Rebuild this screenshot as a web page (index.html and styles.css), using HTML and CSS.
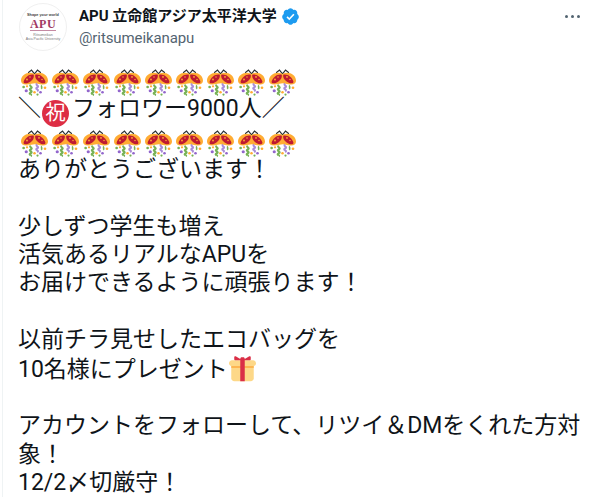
FILE: index.html
```html
<!DOCTYPE html>
<html lang="ja">
<head>
    <meta charset="UTF-8">
    <meta name="viewport" content="width=device-width, initial-scale=1.0">
    <title>APU 立命館アジア太平洋大学</title>
    <link rel="stylesheet" href="styles.css">
</head>
<body>
    <svg class="defs" width="0" height="0">
        <symbol id="confetti" viewBox="0 0 36 36">
            <path d="M18 6.500 L14 1.500 L9.500 5 M18 6.500 L22 1.500 L26.500 5" fill="none" stroke="#292f33" stroke-width="1.500"/>
            <path d="M17 6C9 3 0 8 0 15.500C0 19 3 21 8 20.500L18 19L28 20.500C33 21 36 19 36 15.500C36 8 27 3 19 6L18 7Z" fill="#ffac33"/>
            <path d="M17 7.500C12 6 5.500 10 3.500 16.500C3 19 6 19.500 9 18.500C14 16.500 18 12 17 7.500Z" fill="#be1931"/>
            <path d="M19 7.500C24 6 30.500 10 32.500 16.500C33 19 30 19.500 27 18.500C22 16.500 18 12 19 7.500Z" fill="#be1931"/>
            <circle cx="8" cy="14" r="1.200" fill="#ffac33"/>
            <circle cx="12" cy="10.500" r="1" fill="#ffac33"/>
            <circle cx="24" cy="10.500" r="1.200" fill="#ffac33"/>
            <circle cx="28" cy="14" r="1" fill="#ffac33"/>
            <path d="M13 21c-3 2 4 3 0 5s4 3 0 5s2 2.500 0 4" fill="none" stroke="#77b255" stroke-width="2.800"/>
            <path d="M21.500 19.500c-3 2 4 3 0 5s4 3 0 5" fill="none" stroke="#aa8dd8" stroke-width="2.800"/>
            <path d="M28 22c-2 1 1 3-1 4.500" fill="none" stroke="#77b255" stroke-width="2.200"/>
            <circle cx="3.500" cy="24" r="1.800" fill="#77b255"/>
            <circle cx="8" cy="23" r="1.500" fill="#ffac33"/>
            <circle cx="7" cy="29" r="2.100" fill="#9266cc"/>
            <circle cx="18" cy="31" r="1.700" fill="#ffac33"/>
            <circle cx="26" cy="31" r="1.800" fill="#9266cc"/>
            <circle cx="32" cy="25" r="1.800" fill="#ffac33"/>
            <circle cx="22" cy="34" r="1.500" fill="#77b255"/>
        </symbol>
    </svg>

    <div class="tweet">
        <div class="tweet-head">
            <div class="avatar">
                <span class="avatar-top">Shape your world</span>
                <span class="avatar-logo">APU</span>
                <span class="avatar-sub">Ritsumeikan<br>Asia Pacific University</span>
            </div>
            <div class="names">
                <div class="display-name">
                    APU 立命館アジア太平洋大学
                    <svg class="verified" viewBox="0 0 24 24">
                        <path fill="#1d9bf0" d="M22.500 12.500c0-1.580-.875-2.950-2.150-3.600.154-.435.238-.905.238-1.400 0-2.210-1.710-3.998-3.818-3.998-.470 0-.920.084-1.336.250C14.818 2.415 13.510 1.500 12 1.500s-2.816.917-3.437 2.250c-.415-.165-.866-.250-1.336-.250-2.110 0-3.818 1.790-3.818 4 0 .494.083.964.237 1.400-1.272.650-2.147 2.018-2.147 3.600 0 1.495.782 2.798 1.942 3.486-.020.170-.032.340-.032.514 0 2.210 1.708 4 3.818 4 .470 0 .920-.086 1.335-.250.620 1.334 1.926 2.250 3.437 2.250 1.512 0 2.818-.916 3.437-2.250.415.163.865.248 1.336.248 2.110 0 3.818-1.790 3.818-4 0-.174-.012-.344-.033-.513 1.158-.687 1.943-1.990 1.943-3.484z"/>
                        <path fill="#fff" d="M10.500 16.800 6.900 13.200l1.500-1.500 2.100 2.100 5-5.400 1.550 1.450z"/>
                    </svg>
                </div>
                <div class="handle">@ritsumeikanapu</div>
            </div>
            <div class="more"><i></i><i></i><i></i></div>
        </div>

        <div class="tweet-text">
            <div class="emoji-row">
                <svg class="emoji"><use href="#confetti"/></svg>
                <svg class="emoji"><use href="#confetti"/></svg>
                <svg class="emoji"><use href="#confetti"/></svg>
                <svg class="emoji"><use href="#confetti"/></svg>
                <svg class="emoji"><use href="#confetti"/></svg>
                <svg class="emoji"><use href="#confetti"/></svg>
                <svg class="emoji"><use href="#confetti"/></svg>
                <svg class="emoji"><use href="#confetti"/></svg>
                <svg class="emoji"><use href="#confetti"/></svg>
            </div>
            <div class="line">＼<span class="iwai">祝</span>フォロワー9000人／</div>
            <div class="emoji-row">
                <svg class="emoji"><use href="#confetti"/></svg>
                <svg class="emoji"><use href="#confetti"/></svg>
                <svg class="emoji"><use href="#confetti"/></svg>
                <svg class="emoji"><use href="#confetti"/></svg>
                <svg class="emoji"><use href="#confetti"/></svg>
                <svg class="emoji"><use href="#confetti"/></svg>
                <svg class="emoji"><use href="#confetti"/></svg>
                <svg class="emoji"><use href="#confetti"/></svg>
                <svg class="emoji"><use href="#confetti"/></svg>
            </div>
            <div class="line">ありがとうございます！</div>
            <div class="line">&nbsp;</div>
            <div class="line">少しずつ学生も増え</div>
            <div class="line">活気あるリアルなAPUを</div>
            <div class="line">お届けできるように頑張ります！</div>
            <div class="line">&nbsp;</div>
            <div class="line">以前チラ見せしたエコバッグを</div>
            <div class="line">10名様にプレゼント<svg class="gift" viewBox="0 0 36 36">
                <path fill="#fdd888" d="M33 31c0 2.200-1.800 4-4 4H7c-2.200 0-4-1.800-4-4V14c0-2.200 1.800-4 4-4h22c2.200 0 4 1.800 4 4v17z"/>
                <path fill="#fdd888" d="M36 11c0 2.200-1.800 4-4 4H4c-2.200 0-4-1.800-4-4s1.800-4 4-4h28c2.200 0 4 1.800 4 4z"/>
                <path fill="#fcab40" d="M3 15h30v2H3z"/>
                <path fill="#da2f47" d="M19 3h-2c-1.100 0-2 .9-2 2v30h6V5c0-1.100-.9-2-2-2z"/>
                <path fill="#da2f47" d="M16 7c1.100 0 1.200-.500.200-1.100L8.900 1.800C7.900 1.300 7 1.700 7 2.800V6c0 .600.500 1 1 1h8zm4 0c-1.100 0-1.200-.500-.200-1.100l7.300-4.100c1-.500 1.900-.100 1.900 1V6c0 .600-.500 1-1 1h-8z"/>
            </svg></div>
            <div class="line">&nbsp;</div>
            <div class="line">アカウントをフォローして、リツイ＆DMをくれた方対象！</div>
            <div class="line">12/2〆切厳守！</div>
        </div>
    </div>
</body>
</html>
```

FILE: styles.css
```css
body {
    margin: 0;
    background: #fff;
    color: #0f1419;
    font-family: Roboto, "Noto Sans CJK JP", sans-serif;
    overflow: hidden;
}

.defs {
    display: block;
    height: 0;
}

.tweet {
    height: 497px;
    margin-left: 2px;
    padding: 0 15px 0 16px;
    border-left: 1px solid #eff3f4;
}

.tweet-head {
    display: flex;
    align-items: flex-start;
    padding-top: 3px;
    height: 67px;
    box-sizing: border-box;
}

.avatar {
    width: 48px;
    height: 48px;
    border-radius: 50%;
    border: 1px solid #f0f0f0;
    box-sizing: border-box;
    display: flex;
    flex-direction: column;
    align-items: center;
    justify-content: center;
    text-align: center;
    color: #777;
    font-family: "Liberation Sans", sans-serif;
    font-size: 3.500px;
    line-height: 4px;
    flex-shrink: 0;
}

.avatar-top {
    font-weight: bold;
    color: #444;
    font-size: 3.800px;
    line-height: 3px;
}

.avatar-logo {
    font-family: "Liberation Serif", serif;
    font-size: 12px;
    line-height: 11px;
    letter-spacing: 0.500px;
    font-weight: bold;
    color: #a13a63;
    border-bottom: 1px solid #c58aa3;
    margin: 2px 0;
}

.names {
    margin-left: 12px;
    flex: 1;
}

.display-name {
    display: flex;
    align-items: center;
    gap: 4px;
    font-size: 15px;
    font-weight: 700;
    line-height: 20px;
    padding-top: 3px;
}

.verified {
    width: 19px;
    height: 19px;
}

.handle {
    color: #536471;
    font-size: 15px;
    line-height: 20px;
    letter-spacing: -0.100px;
    margin-top: 2px;
}

.more {
    display: flex;
    gap: 3px;
    margin-top: 12px;
    margin-right: 5px;
}

.more i {
    width: 3px;
    height: 3px;
    border-radius: 50%;
    background: #536471;
}

.tweet-text {
    font-size: 23px;
    line-height: 28.400px;
    margin-left: -1px;
}

.emoji-row {
    display: flex;
    gap: 4px;
    height: 28.400px;
    align-items: flex-end;
    padding-left: 3px;
}

.emoji {
    width: 27px;
    height: 27px;
    margin-bottom: -1px;
}

.iwai {
    display: inline-block;
    width: 27px;
    height: 27px;
    margin: 0 3px 0 1px;
    border-radius: 50%;
    background: #dd2e44;
    color: #fff;
    font-size: 20px;
    line-height: 27px;
    text-align: center;
    vertical-align: -4px;
}

.gift {
    width: 27px;
    height: 27px;
    vertical-align: -5px;
    margin-left: 1px;
}
```
